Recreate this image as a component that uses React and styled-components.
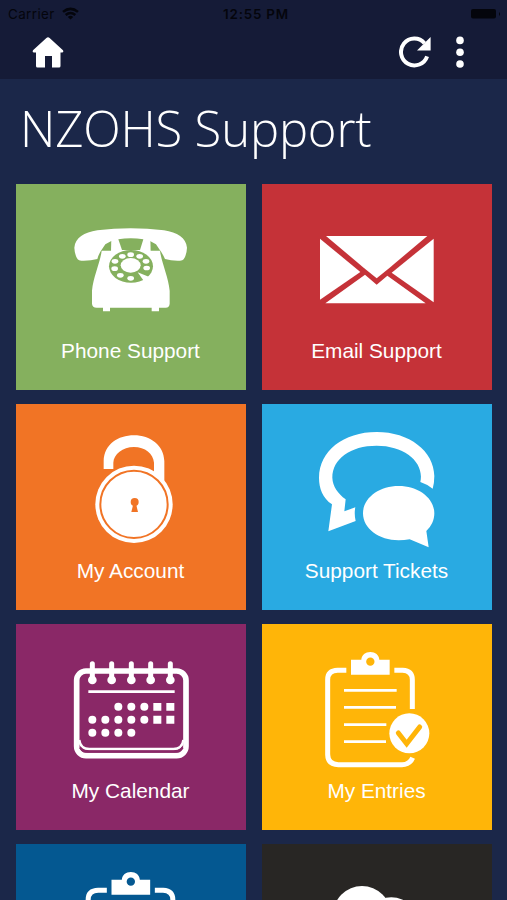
import React from 'react';
import styled, { createGlobalStyle } from 'styled-components';

const GlobalStyle = createGlobalStyle`
  * {
    box-sizing: border-box;
  }

  body {
    margin: 0;
    background: #1b2749;
    overflow: hidden;
  }
`;

const StyledPage = styled.div`
  width: 507px;
  height: 900px;
  overflow: hidden;
  background: #1b2749;
  color: #fff;
  font-family: 'Liberation Sans', Arial, sans-serif;
`;

const StyledHeader = styled.header`
  height: 79px;
  background: #151b37;
`;

const StyledStatusBar = styled.div`
  display: grid;
  grid-template-columns: 1fr auto 1fr;
  align-items: center;
  height: 27px;
  padding: 0 4px 0 8px;
  color: #04050c;
  font-family: Inter, sans-serif;
  font-size: 13.4px;
`;

const StyledCarrier = styled.div`
  display: flex;
  align-items: center;
  gap: 7px;
  letter-spacing: 0.4px;
`;

const StyledTime = styled.div`
  padding-left: 1px;
  font-weight: 600;
  letter-spacing: 0.8px;
`;

const StyledBattery = styled.svg`
  justify-self: end;
`;

const StyledToolbar = styled.nav`
  display: flex;
  align-items: center;
  height: 50px;
  padding: 0 43px 0 32px;
`;

const StyledButton = styled.button`
  display: flex;
  padding: 0;
  border: 0;
  background: none;
  color: inherit;
  margin-left: ${props => props.$push || '0'};
`;

const StyledTitle = styled.h1`
  height: 105px;
  margin: 0;
  padding: 13px 0 0 20px;
  font-family: 'Open Sans', sans-serif;
  font-size: 49px;
  font-weight: 300;
  line-height: 72px;
  letter-spacing: -0.18px;
  white-space: nowrap;
`;

const StyledGrid = styled.main`
  display: grid;
  grid-template-columns: 230px 230px;
  grid-auto-rows: 206px;
  gap: 14px 16px;
  padding: 0 16px;
`;

const StyledTile = styled.section`
  display: flex;
  flex-direction: column;
  align-items: center;
  background: ${props => props.$color};
`;

const StyledLabel = styled.div`
  padding-right: 1px;
  font-size: 20.8px;
  line-height: 30px;
`;

function Artwork({ x, y, children }) {
  return (
    <svg width="230" height="152" viewBox="0 0 230 152" fill="#fff">
      <g transform={`translate(${x} ${y}) scale(0.33333)`}>{children}</g>
    </svg>
  );
}

function PhoneIcon({ color }) {
  const holes = [
    [187, 124], [212, 119], [239, 124], [258, 139], [260, 159],
    [165, 139], [164, 161], [181, 181], [212, 190],
  ];
  return (
    <Artwork x={44} y={31}>
      <path d="M43 98C46 68 72 53 112 46Q212 33 312 46C352 53 378 68 381 98Q380 120 371 133Q368 137 360 137Q335 138 315 132Q308 116 298 103L288 88L270 78H154L136 88L126 103Q116 116 112 132Q90 138 64 137Q56 137 53 133Q44 120 43 98Z" />
      <path d="M125 107H300C305 145 325 185 329 227V266Q328 278 317 278H297V289H275V278H150V289H129V278H110Q97 278 96 266V227C100 185 120 145 125 107Z" />
      <path d="M154 70H271L272 110H153Z" />
      <path d="M175 73Q212 66 250 73L240 105H186Z" fill={color} />
      <ellipse cx="213" cy="154" rx="66" ry="49" fill={color} />
      <ellipse cx="212" cy="151" rx="30" ry="22" />
      {holes.map(([cx, cy]) => <ellipse key={`${cx}-${cy}`} cx={cx} cy={cy} rx="10" ry="7" />)}
      <path d="M233 172L268 186L252 199Z" />
    </Artwork>
  );
}

function EmailIcon() {
  return (
    <Artwork x={38} y={31}>
      <path d="M78 63H382L269 158L230 190L191 158Z" />
      <path d="M60 71L181 171L60 254Z" />
      <path d="M401 71V262L275 173Z" />
      <path d="M76 265L195 179L230 209L262 182L377 265Z" />
    </Artwork>
  );
}

function LockIcon({ color }) {
  return (
    <Artwork x={44} y={21}>
      <path d="M131 132V108C133 58 174 31 222 31C271 31 312 61 313 108V175L282 145V113C280 86 255 66 222 66C188 66 161 88 160 113V132Z" />
      <circle cx="222" cy="238" r="116" />
      <circle cx="222" cy="238" r="101" fill="none" stroke={color} strokeWidth="6" />
      <circle cx="224" cy="231" r="12" fill={color} />
      <path d="M220 236H228L234 261H214Z" fill={color} />
    </Artwork>
  );
}

function TicketsIcon() {
  return (
    <Artwork x={38} y={21}>
      <path d="M96 238C68 219 57 190 57 158C58 78 130 21 230 21C328 21 402 78 403 153Q403 173 398 191Q382 178 361 171C374 112 315 62 230 62C151 62 97 102 97 158C98 184 114 206 137 223L133 259L166 247Q162 267 167 288L85 319Z" />
      <path d="M189 265C189 219 237 183 296 183C355 183 403 219 403 265C403 286 394 304 379 318L386 367L329 343Q313 346 296 346C237 346 189 311 189 265Z" />
    </Artwork>
  );
}

function CalendarIcon({ color }) {
  const columns = [97, 136, 175, 214, 253, 292, 331];
  return (
    <Artwork x={44} y={21}>
      <rect x="50" y="78" width="328" height="254" rx="28" fill="none" stroke="#fff" strokeWidth="17" />
      <path d="M58 285Q61 312 88 312H340Q367 312 370 285" fill="none" stroke="#fff" strokeWidth="7" />
      <path d="M60 307Q68 320 84 320H344Q360 320 368 307" fill="none" stroke={color} strokeWidth="7" />
      {[97, 155, 214, 272, 331].map(x => (
        <g key={x}>
          <path d={`M${x} 56V101`} stroke="#fff" strokeWidth="15" strokeLinecap="round" />
          <circle cx={x} cy="105" r="13" />
        </g>
      ))}
      <path d="M85 140H344" stroke="#fff" strokeWidth="8" />
      {columns.slice(2, 5).map(x => <circle key={x} cx={x} cy="185" r="12" />)}
      {columns.slice(0, 5).map(x => <circle key={x} cx={x} cy="224" r="12" />)}
      {columns.slice(0, 4).map(x => <circle key={x} cx={x} cy="263" r="12" />)}
      {columns.slice(5).map(x => (
        <path key={x} d={`M${x - 12} 174h24v23h-24ZM${x - 12} 212h24v24h-24Z`} />
      ))}
    </Artwork>
  );
}

function ClipboardIcon({ color, x = 43 }) {
  return (
    <Artwork x={x} y={16}>
      <path d="M124 91H98Q68 92 68 119V344Q69 374 100 374H291Q314 374 323 353M268 91H293Q322 93 322 119V207" fill="none" stroke="#fff" strokeWidth="15" />
      <path d="M138 59H169C170 45 181 36 196 36C211 36 222 45 223 59H254V104H138Z" />
      <circle cx="196" cy="65" r="12.5" fill={color} />
      <path d="M117 151H275M117 202H273M117 254H244M117 305H243" stroke="#fff" strokeWidth="8" />
      <circle cx="313" cy="280" r="60" />
      <path d="M280 279L305 311L344 261" fill="none" stroke={color} strokeWidth="15" strokeLinecap="round" strokeLinejoin="miter" />
    </Artwork>
  );
}

function CloudIcon() {
  return (
    <Artwork x={0} y={0}>
      <circle cx="300" cy="213" r="87" />
      <circle cx="388" cy="244" r="84" />
    </Artwork>
  );
}

const tiles = [
  { label: 'Phone Support', color: '#85b05e', Icon: PhoneIcon },
  { label: 'Email Support', color: '#c53238', Icon: EmailIcon },
  { label: 'My Account', color: '#f17425', Icon: LockIcon },
  { label: 'Support Tickets', color: '#29aae2', Icon: TicketsIcon },
  { label: 'My Calendar', color: '#8a2867', Icon: CalendarIcon },
  { label: 'My Entries', color: '#ffb508', Icon: ClipboardIcon },
  { color: '#045891', Icon: ClipboardIcon, x: 49.5 },
  { color: '#282624', Icon: CloudIcon },
];

function Header() {
  return (
    <StyledHeader>
      <StyledStatusBar>
        <StyledCarrier>
          Carrier
          <svg width="17" height="13" viewBox="0 0 17 13" fill="none" stroke="currentColor" strokeWidth="2.5">
            <path d="M1 4.9Q8.5 -1.2 16 4.9M3.7 8Q8.5 4 13.3 8" />
            <path d="M5.8 9.9Q8.5 7.8 11.2 9.9L8.5 12.6Z" fill="currentColor" stroke="none" />
          </svg>
        </StyledCarrier>
        <StyledTime>12:55 PM</StyledTime>
        <StyledBattery width="32" height="12" viewBox="0 0 32 12" fill="currentColor">
          <rect x="0" y="1" width="25" height="9.5" rx="2" />
          <path d="M28 4Q30 6 28 8Z" />
        </StyledBattery>
      </StyledStatusBar>
      <StyledToolbar>
        <StyledButton aria-label="Home">
          <svg width="32" height="31" viewBox="0 0 32 31" fill="#fff">
            <path d="M14.4 1Q16 -.3 17.6 1L31 13.3Q32 15.5 30 15.5H28.5V29Q28.5 30.5 27 30.5H20V19H13V30.5H5.5Q4 30.5 4 29V15.5H2Q0 15.5 1 13.3Z" />
          </svg>
        </StyledButton>
        <StyledButton aria-label="Refresh" $push="auto">
          <svg width="32" height="32" viewBox="0 0 32 32">
            <path d="M28.1 20.3A13.4 13.4 0 1 1 25.5 7.2" fill="none" stroke="#fff" strokeWidth="4" />
            <path d="M31.6 1V14.6H18Z" fill="#fff" />
          </svg>
        </StyledButton>
        <StyledButton aria-label="More" $push="25px">
          <svg width="8" height="32" viewBox="0 0 8 32" fill="#fff">
            <circle cx="4" cy="4.4" r="3.8" />
            <circle cx="4" cy="16.2" r="3.8" />
            <circle cx="4" cy="28" r="3.8" />
          </svg>
        </StyledButton>
      </StyledToolbar>
    </StyledHeader>
  );
}

/**
 * App
 * @description Support home screen with a two column menu of tiles.
 */
function App() {
  return (
    <StyledPage>
      <GlobalStyle />
      <Header />
      <StyledTitle>NZOHS Support</StyledTitle>
      <StyledGrid>
        {tiles.map(({ label, color, Icon, x }) => (
          <StyledTile key={color} $color={color}>
            <Icon color={color} x={x} />
            {label && <StyledLabel>{label}</StyledLabel>}
          </StyledTile>
        ))}
      </StyledGrid>
    </StyledPage>
  );
}

export default App;
